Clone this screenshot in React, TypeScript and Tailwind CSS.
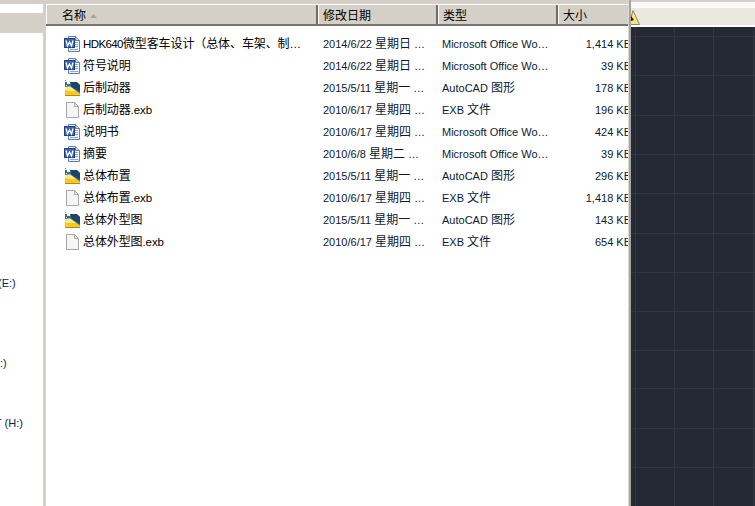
import React from "react";

const WordIcon = () => (
  <svg width="16" height="16" viewBox="0 0 16 16" className="shrink-0">
    <path d="M4.5 0.5H11.5L15.5 4.5V15.5H4.5Z" fill="#eef3fb" stroke="#5f7fb0" />
    <path d="M11.5 0.5V4.5H15.5" fill="#c6d4ea" stroke="#5f7fb0" />
    <path d="M11 6.5H14M11 8.5H14M11 10.5H14M6 13.5H14" stroke="#8fa8d0" />
    <rect x="0.5" y="2.5" width="10" height="9" fill="#3a68b8" stroke="#1f3f80" />
    <path d="M2 4.5L3.5 10L5.5 6L7.5 10L9 4.5" fill="none" stroke="#ffffff" strokeWidth="1.3" />
  </svg>
);

const CadIcon = () => (
  <svg width="16" height="16" viewBox="0 0 16 16" className="shrink-0">
    <path d="M1 2H12L16 5V15H1Z" fill="#3a6b9a" />
    <path d="M7 2H13L16 5V12L7 6Z" fill="#1f4468" />
    <path d="M1 7L6 6.5L16 13.5V15.5H1Z" fill="#f7c81e" />
    <path d="M1 7L6 6.5L12 11H4L1 10Z" fill="#ffe98a" />
    <path d="M1 15.5H16" stroke="#b08c10" />
    <rect x="3" y="1" width="3" height="3" fill="#ffffff" />
    <rect x="1" y="0" width="1" height="1" fill="#5a88b5" />
    <rect x="7" y="1" width="1" height="1" fill="#ffffff" />
    <rect x="2" y="5" width="1" height="1" fill="#d5e4f2" />
  </svg>
);

const BlankIcon = () => (
  <svg width="16" height="16" viewBox="0 0 16 16" className="shrink-0">
    <path d="M2.5 0.5H10.5L14.5 4.5V15.5H2.5Z" fill="#f6f6f6" stroke="#a8a8a8" />
    <path d="M10.5 0.5V4.5H14.5Z" fill="#e4e4e4" stroke="#a8a8a8" />
  </svg>
);

const iconOf = { w: <WordIcon />, c: <CadIcon />, b: <BlankIcon /> };

const Mixed = ({ text }: { text: string }) => (
  <>
    {text.split(/([\u3000-\u9fff\uff00-\uffef]+)/).map((part, i) =>
      i % 2 === 1 ? (
        <span key={i} className="text-[12px]">
          {part}
        </span>
      ) : (
        <span key={i} className={part.startsWith("HDK") ? "tracking-[-0.6px]" : ""}>
          {part}
        </span>
      ),
    )}
  </>
);

const rows: [keyof typeof iconOf, string, string, string, string][] = [
  ["w", "HDK640微型客车设计（总体、车架、制…", "2014/6/22 星期日 …", "Microsoft Office Wo…", "1,414 KB"],
  ["w", "符号说明", "2014/6/22 星期日 …", "Microsoft Office Wo…", "39 KB"],
  ["c", "后制动器", "2015/5/11 星期一 …", "AutoCAD 图形", "178 KB"],
  ["b", "后制动器.exb", "2010/6/17 星期四 …", "EXB 文件", "196 KB"],
  ["w", "说明书", "2010/6/17 星期四 …", "Microsoft Office Wo…", "424 KB"],
  ["w", "摘要", "2010/6/8 星期二 …", "Microsoft Office Wo…", "39 KB"],
  ["c", "总体布置", "2015/5/11 星期一 …", "AutoCAD 图形", "296 KB"],
  ["b", "总体布置.exb", "2010/6/17 星期四 …", "EXB 文件", "1,418 KB"],
  ["c", "总体外型图", "2015/5/11 星期一 …", "AutoCAD 图形", "143 KB"],
  ["b", "总体外型图.exb", "2010/6/17 星期四 …", "EXB 文件", "654 KB"],
];

const HeaderCell = ({ label, className }: { label: React.ReactNode; className: string }) => (
  <div className={`flex items-center pl-[4px] pt-[3px] border-r-2 border-r-[#6f6c64] border-l border-l-white ${className}`}>
    {label}
  </div>
);

export default function App() {
  const vs = [636, 675, 714, 754];
  const hs = [36, 75, 115, 154, 193, 233, 272, 311, 350, 388, 428, 467];
  return (
    <div
      className="w-[755px] h-[506px] overflow-hidden flex bg-white text-[12px] text-[#000000]"
      style={{ fontFamily: '"Liberation Sans", "Noto Sans CJK SC", sans-serif' }}
    >
      <aside className="w-[43px] shrink-0 flex flex-col overflow-hidden whitespace-nowrap text-[11px] text-[#10243e]">
        <div className="h-[4px] bg-[#d4d0c8]" />
        <div className="h-[9px]" />
        <div className="h-[20px] bg-[#d4d0c8]" />
        <div className="h-[240px]" />
        <div className="h-[20px] leading-[21px] -ml-[2px]">(E:)</div>
        <div className="h-[60px]" />
        <div className="h-[20px] leading-[21px]">:)</div>
        <div className="h-[40px]" />
        <div className="h-[20px] leading-[21px] -ml-[5px]">T (H:)</div>
      </aside>
      <div className="w-[3px] shrink-0 bg-[#d4d0c8]" />
      <main className="w-[582px] shrink-0 flex flex-col overflow-hidden">
        <div className="h-[4px] shrink-0 bg-[#d4d0c8]" />
        <div className="h-[22px] shrink-0 flex bg-[#d4d0c8] border-b-2 border-b-[#77756e] border-t border-t-white">
          <HeaderCell
            label={
              <>
                <span>名称</span>
                <svg width="7" height="4" viewBox="0 0 7 4" className="ml-[4px]">
                  <path d="M0 4L3.5 0L7 4Z" fill="#a8a59c" />
                </svg>
              </>
            }
            className="w-[272px] pl-[15px]"
          />
          <HeaderCell label="修改日期" className="w-[120px]" />
          <HeaderCell label="类型" className="w-[120px]" />
          <div className="flex-1 flex items-center pl-[4px] pt-[3px] border-l border-l-white">大小</div>
        </div>
        <div className="flex flex-col pt-[7px] text-[11px]">
          {rows.map((r, i) => (
            <div key={i} className="h-[22px] flex items-center whitespace-nowrap text-[#0b1a33]">
              <div className="w-[272px] shrink-0 flex items-center pl-[18px] gap-[3px] text-black">
                {iconOf[r[0]]}
                <span className="text-[11.5px] tracking-[-0.1px]">
                  <Mixed text={r[1]} />
                </span>
              </div>
              <div className="w-[120px] shrink-0 pl-[5px]">
                <Mixed text={r[2]} />
              </div>
              <div className="w-[120px] shrink-0 pl-[4px]">
                <Mixed text={r[3]} />
              </div>
              <div className="w-[73px] shrink-0 text-right">{r[4]}</div>
            </div>
          ))}
        </div>
      </main>
      <div className="w-[1px] shrink-0 bg-[#dcd9d2]" />
      <div className="w-[2px] shrink-0 bg-[#a7a49c]" />
      <section className="flex-1 flex flex-col overflow-hidden">
        <div className="h-[2px] bg-[#d4d0c8]" />
        <div className="h-[6px] bg-[#f8f8f6]" />
        <div className="h-[17px] bg-[#ebe8e0] overflow-hidden">
          <svg width="12" height="17" viewBox="0 0 12 17">
            <path d="M-2 16.5H8.5L2 2.5Z" fill="#ffe27a" stroke="#8a8678" />
            <path d="M0 8L3 12L0 13Z" fill="#1a1a1a" />
          </svg>
        </div>
        <div className="h-[2px] bg-white" />
        <div className="flex-1 bg-[#232a33]">
          <svg width="124" height="479" viewBox="0 0 124 479">
            {vs.map((x) => (
              <line key={x} x1={x - 632 + 0.5} x2={x - 632 + 0.5} y1="0" y2="479" stroke="#2f3744" />
            ))}
            {hs.map((y) => (
              <line key={y} y1={y - 27 + 0.5} y2={y - 27 + 0.5} x1="0" x2="124" stroke="#2f3744" />
            ))}
          </svg>
        </div>
      </section>
    </div>
  );
}
